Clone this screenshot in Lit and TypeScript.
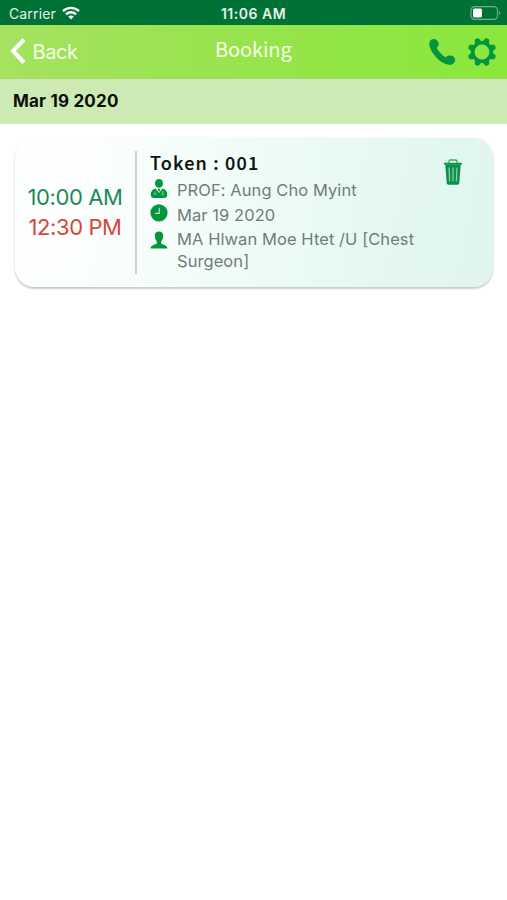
import { LitElement, html, css, svg } from "lit";
import { customElement, property } from "lit/decorators.js";

const gearTeeth = [0, 45, 90, 135, 180, 225, 270, 315].map((a) => a + 22.5);

@customElement("status-bar")
class StatusBar extends LitElement {
  static styles = css`
    :host {
      display: grid;
      grid-template-columns: 1fr auto 1fr;
      align-items: center;
      height: 25px;
      box-sizing: border-box;
      padding: 2px 6px 0 9px;
      background: #007236;
      color: #e3f1e8;
      font: 400 14px/20px Inter, "Liberation Sans", sans-serif;
    }
    .left { display: flex; align-items: center; gap: 6px; }
    .carrier { letter-spacing: 0.14px; }
    .time { font-weight: 600; font-size: 14px; letter-spacing: 0.5px; margin-right: 3px; }
    .right { display: flex; justify-content: flex-end; }
    svg { display: block; margin-top: -1px; }
  `;
  render() {
    return html`
      <div class="left">
        <span class="carrier">Carrier</span>
        <svg width="18" height="14" viewBox="0 0 18 14" fill="none" stroke="#fff" stroke-width="2.4">
          <path d="M1 5.2C5.5 .7 12.500 .7 17 5.200" />
          <path d="M4 8.300C6.800 5.500 11.200 5.500 14 8.300" />
          <path d="M9 13.500L6.200 10.600C7.700 9.200 10.300 9.200 11.800 10.600Z" fill="#fff" stroke="none" />
        </svg>
      </div>
      <div class="time">11:06 AM</div>
      <div class="right">
        <svg width="31" height="14" viewBox="0 0 31 14">
          <rect x="1" y="0.700" width="26.500" height="12.600" rx="3.600" fill="none" stroke="#6fae8a" stroke-width="1.200" />
          <rect x="3" y="2.500" width="9" height="9" rx="1.500" fill="#fff" />
          <path d="M29 4.700Q31.500 7 29 9.300Z" fill="#6fae8a" />
        </svg>
      </div>
    `;
  }
}

@customElement("nav-bar")
class NavBar extends LitElement {
  static styles = css`
    :host {
      display: grid;
      grid-template-columns: 1fr auto 1fr;
      height: 54px;
      box-sizing: border-box;
      padding: 0 10.5px 0 10px;
      background: linear-gradient(90deg, #a5e260, #97e44c 50%, #8ae73c);
      border-bottom: 1px solid #a3d673;
      color: #f8ffe9;
    }
    .back {
      display: flex;
      align-items: center;
      gap: 6.5px;
      font: 400 20px/24px Inter, "Liberation Sans", sans-serif;
      letter-spacing: -0.4px;
    }
    .back svg { margin-top: -2px; }
    .title {
      padding-top: 8px;
      font: 400 20px/32px "Noto Sans CJK SC", "Noto Sans", sans-serif;
      letter-spacing: -0.1px;
    }
    .actions { display: flex; align-items: center; justify-content: flex-end; gap: 12px; padding-right: 1px; }
    .actions svg { margin-top: 1px; }
    svg { display: block; }
  `;
  render() {
    return html`
      <div class="back">
        <svg width="16" height="26" viewBox="0 0 16 26" fill="none" stroke="#fff" stroke-width="4">
          <path d="M14 1.500L3 13L14 24.500" />
        </svg>
        <span>Back</span>
      </div>
      <div class="title">Booking</div>
      <div class="actions">
        <svg width="27" height="28" viewBox="0 0 27 28" fill="#04963e">
          <path d="M1.600 2.200C3.800 .3 7.400 .8 9 3.500C10.400 6.100 9.700 8.200 7.700 9.800C9.400 13.400 13 17.300 16.600 19.200C19 17 22 16.800 24.600 18.700C26.800 20.600 26.600 23.500 24.600 25.400C21.600 27.900 16.300 26.700 11.500 23.300C6.500 19.500 2.600 14.400 .9 9.300C0 6.500 0 3.700 1.600 2.200Z" />
        </svg>
        <svg width="28" height="28" viewBox="-14.500 -14.500 29 29" fill="#04963e">
          <circle r="9.600" fill="none" stroke="#04963e" stroke-width="3.800" />
          ${gearTeeth.map((a) => svg`<path transform="rotate(${a})" d="M-3.500 -10.500L-2.600 -13.200Q-2.300 -14.900 -1 -14.900H1Q2.300 -14.900 2.600 -13.200L3.500 -10.500Z" />`)}
        </svg>
      </div>
    `;
  }
}

@customElement("booking-card")
class BookingCard extends LitElement {
  @property() start = "";
  @property() end = "";
  @property() token = "";
  @property() doctor = "";
  @property() date = "";
  @property() patient = "";

  static styles = css`
    :host {
      display: flex;
      height: 149px;
      box-sizing: border-box;
      padding: 12px 30px 13px 0;
      border-radius: 20px;
      background: linear-gradient(100deg, #fdfffe 12%, #f0fcf8 45%, #e4f8f0 78%, #dff5ed);
      box-shadow: 0 2px 2px #c8ccca, 0 0 2px #e3e6e5;
      font: 400 16.500px/22px Inter, "Liberation Sans", sans-serif;
      color: #747b78;
    }
    .times {
      width: 120px;
      margin-top: 1px;
      display: flex;
      flex-direction: column;
      justify-content: center;
      align-items: center;
      border-right: 2px solid #cdd2d0;
      font-size: 22px;
      line-height: 30px;
      letter-spacing: -0.4px;
      box-sizing: content-box;
    }
    .end { color: #d8453d; }
    .start { color: #198a56; margin-top: -1px; }
    .details { flex: 1; padding-left: 13px; }
    .token {
      height: 29px;
      font: 500 18px/24px "Noto Sans CJK SC", "Noto Sans", sans-serif;
      letter-spacing: 1.2px;
      color: #0c100e;
      -webkit-text-stroke: 0.2px #0c100e;
    }
    .row { display: flex; gap: 9.5px; margin-bottom: 2.500px; letter-spacing: 0.07px; }
    .row svg { flex: none; margin-left: -0.5px; }
    .row span { width: 260px; }
    .trash { margin-top: 9px; }
    svg { display: block; }
  `;
  render() {
    return html`
      <div class="times">
        <div class="start">${this.start}</div>
        <div class="end">${this.end}</div>
      </div>
      <div class="details">
        <div class="token">${this.token}</div>
        <div class="row">
          <svg width="18" height="20" viewBox="0 0 18 20" fill="#04963e">
            <ellipse cx="9" cy="4.400" rx="4" ry="4.400" />
            <path d="M5.600 9.500L9 14L12.400 9.500C15.500 10.300 17.200 12 17.200 15.500Q17.200 19 14 19H4Q.8 19 .8 15.500C.8 12 2.500 10.300 5.600 9.500Z" />
            <path d="M7.700 9.700H10.300L9.700 12L9 13L8.300 12Z" />
            <path d="M5 12.500V14M4 16V15Q5 13 6.200 15V16M12.800 11.500V14" fill="none" stroke="#8fd3ae" stroke-width=".7" />
            <circle cx="12.800" cy="15" r="1" fill="none" stroke="#8fd3ae" stroke-width=".7" />
          </svg>
          <span>${this.doctor}</span>
        </div>
        <div class="row">
          <svg width="18" height="18" viewBox="0 0 18 18">
            <circle cx="9" cy="8.800" r="8.600" fill="#04963e" />
            <path d="M9.300 3.800V9.300H5" fill="none" stroke="#b4e3c8" stroke-width="1.200" />
          </svg>
          <span>${this.date}</span>
        </div>
        <div class="row">
          <svg width="18" height="22" viewBox="0 0 18 22" fill="#04963e">
            <path d="M9 3.500C12 3.500 13.400 5.500 13.200 8.300C13 10.700 12.200 12.300 11.200 13.500V15.600C12.800 17 17.300 17 17.300 20.400H.7C.7 17 5.200 17 6.800 15.600V13.500C5.800 12.300 5 10.700 4.800 8.300C4.600 5.500 6 3.500 9 3.500Z" />
          </svg>
          <span>${this.patient}</span>
        </div>
      </div>
      <svg class="trash" width="20" height="27" viewBox="0 0 20 27">
        <path d="M6 4V2.500Q6 1 7.500 1H12.500Q14 1 14 2.500V4" fill="none" stroke="#3aa671" stroke-width="1.300" />
        <rect x="1" y="3.700" width="18" height="2" rx=".8" fill="#0b9149" />
        <path d="M2.300 5.500H17.700L16.300 24Q16.200 25.800 14.400 25.800H5.600Q3.800 25.800 3.700 24Z" fill="#0b9149" />
        <path d="M6 8.500L6.700 22.500M10 8.500V22.500M14 8.500L13.300 22.500" fill="none" stroke="#8ad3ac" stroke-width="1.200" />
      </svg>
    `;
  }
}

@customElement("app-root")
class AppRoot extends LitElement {
  static styles = css`
    :host { display: block; min-height: 100vh; background: #fff; }
    .day {
      height: 45px;
      box-sizing: border-box;
      padding: 0 13px;
      background: #cdeab5;
      color: #0b0f08;
      font: 700 17px/45px Inter, "Liberation Sans", sans-serif;
      letter-spacing: 0.2px;
    }
    .list { padding: 14px 14px 0 15px; }
  `;
  render() {
    return html`
      <status-bar></status-bar>
      <nav-bar></nav-bar>
      <div class="day">Mar 19 2020</div>
      <div class="list">
        <booking-card
          start="10:00 AM"
          end="12:30 PM"
          token="Token : 001"
          doctor="PROF: Aung Cho Myint"
          date="Mar 19 2020"
          patient="MA Hlwan Moe Htet /U [Chest Surgeon]"
        ></booking-card>
      </div>
    `;
  }
}
